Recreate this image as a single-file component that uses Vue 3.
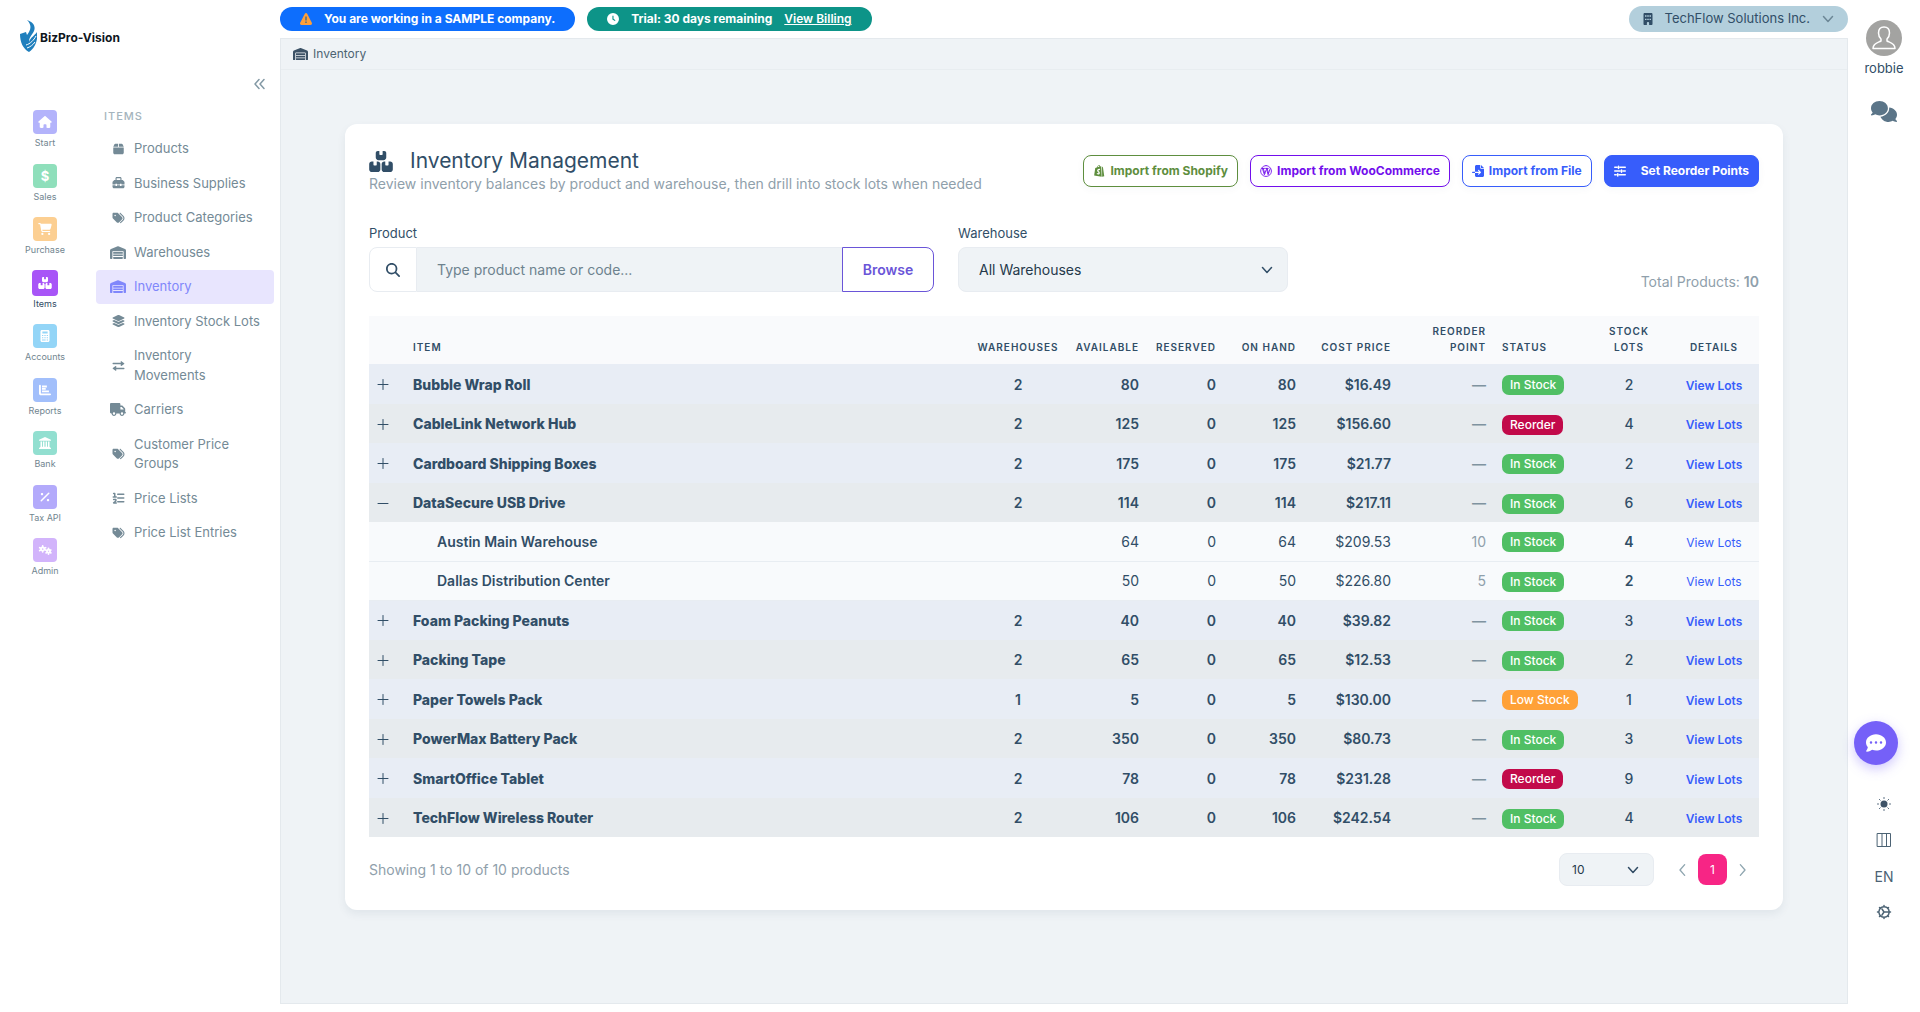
<template>
    <div class="layout">
        <aside class="sidebar">
            <a class="logo" href="#">
                <svg class="logo-mark" viewBox="0 0 17 32" aria-hidden="true">
                    <path fill="#1f7fbd" d="M7 0c6 2 9 6 7 11c-2 4-5 6-5 11c1-4 6-7 8-10c1 7-1 15-8 20C3 29 0 22 0 14l6-2l1 3c3-4 6-9 0-15z" />
                    <path fill="none" stroke="#fff" stroke-width="1" d="M6 25c4-1 8-5 10-9M7 28c3-1 6-3 8-6" />
                </svg>
                <span>BizPro-Vision</span>
            </a>
            <button class="collapse" type="button" aria-label="Collapse menu"><AppIcon name="collapse" /></button>
            <div class="menus">
                <nav class="rail">
                    <a v-for="entry in modules" :key="entry.label" href="#" class="module" :class="[entry.tone, { active: entry.active }]">
                        <span class="tile">
                            <template v-if="entry.icon === 'dollar'">$</template>
                            <AppIcon v-else :name="entry.icon" />
                        </span>
                        <span class="module-label">{{ entry.label }}</span>
                    </a>
                </nav>
                <nav class="submenu">
                    <h2>ITEMS</h2>
                    <ul>
                        <li v-for="link in links" :key="link.label">
                            <a href="#" :class="{ active: link.active }">
                                <span class="link-icon"><AppIcon :name="link.icon" :class="{ wide: link.wide }" /></span>
                                <span>{{ link.label }}</span>
                            </a>
                        </li>
                    </ul>
                </nav>
            </div>
        </aside>

        <main class="main">
            <header class="topbar">
                <div class="pill sample">
                    <svg class="pill-icon" viewBox="0 0 12 12" aria-hidden="true">
                        <path fill="#ff9f38" d="M6 0c.6 0 .9.3 1.2.8l4.6 9c.5 1-.1 2.2-1.2 2.2H1.4C.3 12-.3 10.8.2 9.8l4.6-9C5.1.3 5.4 0 6 0z" />
                        <path fill="#3f6b8a" d="M5.3 3.5h1.4v4H5.3zM5.3 8.5h1.4V10H5.3z" />
                    </svg>
                    <span>You are working in a SAMPLE company.</span>
                </div>
                <div class="pill trial">
                    <AppIcon name="clock" class="pill-icon" />
                    <span>Trial: 30 days remaining</span>
                    <a href="#">View Billing</a>
                </div>
                <button class="company" type="button">
                    <AppIcon name="building" class="company-icon" />
                    <span>TechFlow Solutions Inc.</span>
                    <AppIcon name="chevronDown" class="company-arrow" />
                </button>
            </header>

            <div class="frame">
                <nav class="breadcrumb">
                    <AppIcon name="warehouse" class="crumb-icon" />
                    <span>Inventory</span>
                </nav>

                <section class="card">
                    <div class="card-head">
                        <div>
                            <h1><AppIcon name="boxes" class="title-icon" />Inventory Management</h1>
                            <p>Review inventory balances by product and warehouse, then drill into stock lots when needed</p>
                        </div>
                        <div class="actions">
                            <button type="button" class="btn shopify"><AppIcon name="shopify" />Import from Shopify</button>
                            <button type="button" class="btn woo"><AppIcon name="wordpress" />Import from WooCommerce</button>
                            <button type="button" class="btn file"><AppIcon name="fileImport" />Import from File</button>
                            <button type="button" class="btn reorder-btn"><AppIcon name="sliders" />Set Reorder Points</button>
                        </div>
                    </div>

                    <div class="filters">
                        <div class="field product-field">
                            <label for="product">Product</label>
                            <div class="input-group">
                                <span class="search-icon"><AppIcon name="search" /></span>
                                <input id="product" v-model="search" type="text" placeholder="Type product name or code...">
                                <button type="button" class="browse">Browse</button>
                            </div>
                        </div>
                        <div class="field warehouse-field">
                            <label for="warehouse">Warehouse</label>
                            <div class="select-box">
                                <select id="warehouse">
                                    <option>All Warehouses</option>
                                    <option>Austin Main Warehouse</option>
                                    <option>Dallas Distribution Center</option>
                                </select>
                                <AppIcon name="chevronDown" class="select-arrow" />
                            </div>
                        </div>
                        <div class="total">Total Products: <strong>10</strong></div>
                    </div>

                    <table>
                        <colgroup>
                            <col class="c-toggle"><col><col class="c-warehouses"><col class="c-qty"><col class="c-reserved"><col class="c-qty">
                            <col class="c-mid"><col class="c-mid"><col class="c-mid"><col class="c-qty"><col class="c-details">
                        </colgroup>
                        <thead>
                            <tr>
                                <th></th>
                                <th>ITEM</th>
                                <th class="center">WAREHOUSES</th>
                                <th class="right">AVAILABLE</th>
                                <th class="right">RESERVED</th>
                                <th class="right">ON HAND</th>
                                <th class="right">COST PRICE</th>
                                <th class="right">REORDER POINT</th>
                                <th>STATUS</th>
                                <th class="center">STOCK LOTS</th>
                                <th class="center">DETAILS</th>
                            </tr>
                        </thead>
                        <tbody v-for="item in products" :key="item.name">
                            <tr class="product">
                                <td>
                                    <button type="button" class="toggle" :aria-label="item.open ? 'Collapse' : 'Expand'" @click="item.open = !item.open">
                                        <AppIcon :name="item.open ? 'minus' : 'plus'" />
                                    </button>
                                </td>
                                <td class="name">{{ item.name }}</td>
                                <td class="center">{{ item.warehouses }}</td>
                                <td class="right">{{ item.qty }}</td>
                                <td class="right">0</td>
                                <td class="right">{{ item.qty }}</td>
                                <td class="right">{{ item.cost }}</td>
                                <td class="right muted">—</td>
                                <td><span class="badge" :class="badgeClass(item.status)">{{ item.status }}</span></td>
                                <td class="center lots">{{ item.lots }}</td>
                                <td class="center"><a href="#">View Lots</a></td>
                            </tr>
                            <template v-if="item.open">
                                <tr v-for="row in item.rows" :key="row.name" class="location">
                                    <td></td>
                                    <td class="name">{{ row.name }}</td>
                                    <td></td>
                                    <td class="right">{{ row.qty }}</td>
                                    <td class="right">0</td>
                                    <td class="right">{{ row.qty }}</td>
                                    <td class="right">{{ row.cost }}</td>
                                    <td class="right muted">{{ row.reorder }}</td>
                                    <td><span class="badge" :class="badgeClass(row.status)">{{ row.status }}</span></td>
                                    <td class="center lots">{{ row.lots }}</td>
                                    <td class="center"><a href="#">View Lots</a></td>
                                </tr>
                            </template>
                        </tbody>
                    </table>

                    <div class="card-foot">
                        <span>Showing 1 to 10 of 10 products</span>
                        <div class="pager">
                            <div class="select-box small">
                                <select aria-label="Rows per page">
                                    <option>10</option>
                                    <option>25</option>
                                    <option>50</option>
                                </select>
                                <AppIcon name="chevronDown" class="select-arrow" />
                            </div>
                            <button type="button" class="step" aria-label="Previous"><AppIcon name="chevronLeft" /></button>
                            <button type="button" class="page">1</button>
                            <button type="button" class="step" aria-label="Next"><AppIcon name="chevronRight" /></button>
                        </div>
                    </div>
                </section>
            </div>
        </main>

        <aside class="tools">
            <a class="user" href="#">
                <svg class="avatar" viewBox="0 0 36 36" aria-hidden="true">
                    <circle cx="18" cy="18" r="18" fill="#a3a3a1" />
                    <path fill="none" stroke="#fff" stroke-width="1.5" stroke-linejoin="round" d="M18 7c-4 0-5.5 2.5-5.5 6c0 2.5 1 4.5 2.5 6v2c-3 1.5-8 2-8 7.5h22c0-5.5-5-6-8-7.5v-2c1.5-1.5 2.5-3.5 2.5-6c0-3.5-1.5-6-5.5-6z" />
                </svg>
                <span>robbie</span>
            </a>
            <button type="button" class="messages" aria-label="Messages"><AppIcon name="comments" /></button>
            <div class="tool-list">
                <button type="button" aria-label="Theme">
                    <svg viewBox="0 0 16 16" aria-hidden="true">
                        <circle cx="8" cy="8" r="3.5" fill="#3f5468" />
                        <path stroke="#5f7385" stroke-width="1" d="M8 1v2M8 13v2M1 8h2M13 8h2M3 3l1.5 1.5M11.5 11.5L13 13M3 13l1.5-1.5M11.5 4.5L13 3" />
                    </svg>
                </button>
                <button type="button" aria-label="Layout"><AppIcon name="columns" /></button>
                <button type="button">EN</button>
                <button type="button" aria-label="Settings"><AppIcon name="gear" /></button>
            </div>
        </aside>

        <button type="button" class="chat" aria-label="Chat"><AppIcon name="commentDots" /></button>
    </div>
</template>

<script setup>
import { h, ref } from 'vue';

const icons = {
    house: { box: '0 0 576 512', d: 'M575.8 255.5c0 18-15 32.1-32 32.1h-32l.7 160.2c0 2.7-.2 5.4-.5 8.1V472c0 22.1-17.9 40-40 40H392c-22.1 0-40-17.9-40-40V384c0-17.7-14.3-32-32-32H256c-17.7 0-32 14.3-32 32v88c0 22.1-17.9 40-40 40H104c-22.1 0-40-17.9-40-40V287.6H32c-18 0-32-14-32-32.1c0-9 3-17 10-24L266.4 8c7-7 15-8 22-8s15 2 21 7L564.8 231.5c8 7 12 15 11 24z' },
    cart: { box: '0 0 576 512', d: 'M0 24C0 10.7 10.7 0 24 0H69.5c22 0 41.5 12.8 50.6 32h411c26.3 0 45.5 25 38.6 50.4l-41 152.3c-8.5 31.4-37 53.3-69.5 53.3H170.7l5.4 28.5c2.2 11.3 12.1 19.5 23.6 19.5H488c13.3 0 24 10.7 24 24s-10.7 24-24 24H199.7c-34.6 0-64.3-24.6-70.7-58.5L77.4 54.5c-.7-3.8-4-6.5-7.9-6.5H24C10.7 48 0 37.3 0 24zM128 464a48 48 0 1 1 96 0 48 48 0 1 1 -96 0zm336-48a48 48 0 1 1 0 96 48 48 0 1 1 0-96z' },
    boxes: { box: '0 0 576 512', d: 'M248 0H208c-26.5 0-48 21.5-48 48V160c0 35.3 28.7 64 64 64H352c35.3 0 64-28.7 64-64V48c0-26.5-21.5-48-48-48H328V80c0 8.8-7.2 16-16 16H264c-8.8 0-16-7.2-16-16V0zM64 256c-35.3 0-64 28.7-64 64V448c0 35.3 28.7 64 64 64H208c35.3 0 64-28.7 64-64V320c0-35.3-28.7-64-64-64H184v80c0 8.8-7.2 16-16 16H120c-8.8 0-16-7.2-16-16V256H64zM368 512H512c35.3 0 64-28.7 64-64V320c0-35.3-28.7-64-64-64H472v80c0 8.8-7.2 16-16 16H408c-8.8 0-16-7.2-16-16V256H368c-35.3 0-64 28.7-64 64V448c0 35.3 28.7 64 64 64z' },
    calculator: { box: '0 0 384 512', d: 'M64 0h256c35 0 64 29 64 64v384c0 35-29 64-64 64H64c-35 0-64-29-64-64V64C0 29 29 0 64 0zM80 64v80h224V64zM64 208v48h56v-48zM164 208v48h56v-48zM264 208v48h56v-48zM64 304v48h56v-48zM164 304v48h56v-48zM264 304v48h56v-48zM64 400v48h156v-48zM264 400v48h56v-48z' },
    chart: { box: '0 0 512 512', d: 'M40 32c22 0 40 14 40 32v320c0 9 7 16 16 16h376c54 0 54 80 0 80H80c-44 0-80-36-80-80V64c0-18 18-32 40-32zM128 64h208v80H128zM128 168h160v80H128zM128 272h296v80H128z' },
    bank: { box: '0 0 512 512', d: 'M256 0l232 110c16 8 24 16 24 34v16H0v-16c0-18 8-26 24-34zM64 192h64v224h40V192h64v224h48V192h64v224h40V192h64v224l32 32c20 10 32 22 32 48v16H0v-16c0-26 12-38 32-48l32-32z' },
    percent: { box: '0 0 16 16', line: 2, d: 'M3 13L13 3M3.5 3.5h1v1h-1zM11.5 11.5h1v1h-1z' },
    gears: { box: '0 0 24 18', line: 3, d: 'M8 2v2M8 12v-2M3 5l2 1M13 5l-2 1M3 10l2-1M8 4.5a2.8 2.8 0 1 0 .1 0M18 6v2M18 16v-2M13 9l2 1M22 9l-1 1M14 14l1-1M22 14l-1-1M18 8.5a2.5 2.5 0 1 0 .1 0' },
    box: { box: '0 0 448 512', d: 'M90 32h116v128H0L50 58c8-16 22-26 40-26zM242 32h116c18 0 32 10 40 26l50 102H242zM0 192h448v224c0 35-29 64-64 64H64c-35 0-64-29-64-64z' },
    toolbox: { box: '0 0 512 512', d: 'M176 56v72h160V56c0-5-3-8-8-8H184c-5 0-8 3-8 8zM128 128V56c0-31 25-56 56-56h144c31 0 56 25 56 56v72h28c13 0 25 5 34 14l52 52c9 9 14 21 14 34v92H384v-32h-64v32H192v-32h-64v32H0v-92c0-13 5-25 14-34l52-52c9-9 21-14 34-14zM0 352h128v32h64v-32h128v32h64v-32h128v64c0 35-29 64-64 64H64c-35 0-64-29-64-64z' },
    tags: { box: '0 0 512 512', d: 'M345 39.1L472.8 168.4c52.4 53 52.4 138.2 0 191.2L360.8 472.9c-9.3 9.4-24.5 9.5-33.9 .2s-9.5-24.5-.2-33.9L438.6 325.9c33.9-34.3 33.9-89.4 0-123.7L310.9 72.9c-9.3-9.4-9.2-24.6 .2-33.9s24.6-9.2 33.9 .2zM0 229.5V80C0 53.5 21.5 32 48 32H197.5c17 0 33.3 6.7 45.3 18.7l168 168c25 25 25 65.5 0 90.5L277.3 442.7c-25 25-65.5 25-90.5 0l-168-168C6.7 262.7 0 246.5 0 229.5zM144 144a32 32 0 1 0 -64 0 32 32 0 1 0 64 0z' },
    warehouse: { box: '0 0 640 512', d: 'M0 488V171.3c0-26.2 15.9-49.7 40.2-59.4L308.1 4.8c7.6-3.1 16.1-3.1 23.8 0L599.8 111.9c24.3 9.7 40.2 33.3 40.2 59.4V488c0 13.3-10.7 24-24 24H568c-13.3 0-24-10.7-24-24V224c0-17.7-14.3-32-32-32H128c-17.7 0-32 14.3-32 32V488c0 13.3-10.7 24-24 24H24c-13.3 0-24-10.7-24-24zm488 24l-336 0c-13.3 0-24-10.7-24-24V432H512l0 56c0 13.3-10.7 24-24 24zM128 400V336H512v64H128zm0-96V224H512v80H128z' },
    layers: { box: '32 0 512 512', d: 'M264.5 5.2c14.9-6.9 32.1-6.9 47 0l218.6 101c8.5 3.9 13.9 12.4 13.9 21.8s-5.4 17.9-13.9 21.8l-218.6 101c-14.9 6.9-32.1 6.9-47 0L45.9 149.8C37.4 145.8 32 137.3 32 128s5.4-17.9 13.9-21.8L264.5 5.2zM476.9 209.6l53.2 24.6c8.5 3.9 13.9 12.4 13.9 21.8s-5.4 17.9-13.9 21.8l-218.6 101c-14.9 6.9-32.1 6.9-47 0L45.9 277.8C37.4 273.8 32 265.3 32 256s5.4-17.9 13.9-21.8l53.2-24.6 152 70.2c23.4 10.8 50.4 10.8 73.8 0l152-70.2zm-152 198.2l152-70.2 53.2 24.6c8.5 3.9 13.9 12.4 13.9 21.8s-5.4 17.9-13.9 21.8l-218.6 101c-14.9 6.9-32.1 6.9-47 0L45.9 405.8C37.4 401.8 32 393.3 32 384s5.4-17.9 13.9-21.8l53.2-24.6 152 70.2c23.4 10.8 50.4 10.8 73.8 0z' },
    arrows: { box: '0 0 512 512', d: 'M24 116h328V64c0-14 16-22 27-12l120 88c9 8 9 20 0 28l-120 88c-11 9-27 2-27-12v-64H24c-32 0-32-64 0-64zM488 332H160v-64c0-14-16-22-27-12L13 344c-9 8-9 20 0 28l120 88c11 9 27 2 27-12v-52h328c32 0 32-64 0-64z' },
    truck: { box: '0 0 640 512', d: 'M48 0C21.5 0 0 21.5 0 48V368c0 26.5 21.5 48 48 48H64c0 53 43 96 96 96s96-43 96-96H384c0 53 43 96 96 96s96-43 96-96h32c17.7 0 32-14.3 32-32s-14.3-32-32-32V288 256 237.3c0-17-6.7-33.3-18.7-45.3L512 114.7c-12-12-28.3-18.7-45.3-18.7H416V48c0-26.5-21.5-48-48-48H48zM416 160h50.7L544 237.3V256H416V160zM112 416a48 48 0 1 1 96 0 48 48 0 1 1 -96 0zm368-48a48 48 0 1 1 0 96 48 48 0 1 1 0-96z' },
    list: { box: '0 0 16 16', line: 2, d: 'M7 3h8M7 8h8M7 13h8M1.5 2H3v4M1 6.5h4M1.5 10h3v2l-3 2.500H5' },
    collapse: { box: '0 0 12 12', line: 1.5, d: 'M5.5 1.5L1.5 6l4 4.5M10.5 1.5L6.5 6l4 4.5' },
    clock: { box: '0 0 16 16', d: 'M8 0a8 8 0 1 1 0 16A8 8 0 1 1 8 0zM7.2 3.500v5l3.300 2.200.8-1.200-2.600-1.800V3.500z' },
    building: { box: '0 0 384 512', d: 'M48 0h288c27 0 48 21 48 48v416c0 27-21 48-48 48h-96v-80c0-27-21-48-48-48s-48 21-48 48v80H48c-27 0-48-21-48-48V48C0 21 21 0 48 0zM64 240v56h64v-56zM160 240v56h64v-56zM256 240v56h64v-56zM64 96v64h64V96zM160 96v64h64V96zM256 96v64h64V96z' },
    search: { box: '0 0 512 512', d: 'M416 208c0 45.9-14.9 88.3-40 122.7L502.6 457.4c12.5 12.5 12.5 32.8 0 45.3s-32.8 12.5-45.3 0L330.7 376c-34.4 25.2-76.8 40-122.7 40C93.1 416 0 322.9 0 208S93.1 0 208 0S416 93.1 416 208zM208 352a144 144 0 1 0 0-288 144 144 0 1 0 0 288z' },
    shopify: { box: '0 0 14 16', d: 'M2 4l2-.6C4.500 1.500 5.800.2 7 .2c.9 0 1.500.7 1.800 1.800L10 1.700 10.600 15.800.5 14zM11 2l1.300 1.200L14 15l-2.800.8zM5 3.100l2.700-.8C7.200.6 5.500 1.200 5 3.100zM8.500 5.200C6 4.200 4.300 6 4.500 7.800c.2 1.700 2 1.800 1.800 2.800-.2.800-1.500.2-2 0L4 12c1.800 1.300 4 .5 4.100-1.500.1-2-1.800-2-1.800-3 0-.9 1-.9 1.800-.6z' },
    wordpress: { box: '0 0 16 16', line: 1.2, d: 'M8 .8a7.2 7.2 0 1 0 .1 0M2.5 4.5H6M7.5 4.5H11M3.2 4.5L5.8 13l2.400-6.500M4.300 4.500L6.400 11M8.500 4.500l2.300 8.500L13.500 5M9.500 4.500l1.800 6' },
    fileImport: { box: '0 0 512 512', d: 'M128 64c0-35 29-64 64-64h160v128c0 18 14 32 32 32h128v288c0 35-29 64-64 64H192c-35 0-64-29-64-64V336h174l-39 39c-22 22 11 56 34 34l80-80c9-9 9-25 0-34l-80-80c-23-22-56 12-34 34l39 39H128zM128 288H24c-32 0-32 48 0 48h104zM384 0v128h128z' },
    sliders: { box: '0 0 16 16', line: 2, d: 'M1 3h3M8 3h7M6 1.5v3M1 8h7M12 8h3M10 6.5v3M1 13h2M7 13h8M5 11.5v3' },
    plus: { box: '0 0 12 12', line: 1, d: 'M1 6.5h10M6 1.5v10' },
    minus: { box: '0 0 12 12', line: 1, d: 'M1 6.5h10' },
    chevronDown: { box: '0 0 12 12', line: 1.5, d: 'M1.5 3.5L6 8.5l4.5-5' },
    chevronLeft: { box: '0 0 12 12', line: 1, d: 'M8 2L4.500 6L8 10' },
    chevronRight: { box: '0 0 12 12', line: 1, d: 'M4 2l3.500 4L4 10' },
    columns: { box: '0 0 16 16', line: 1, d: 'M1.5 1.5h13v13h-13zM6 1.5v13M10.5 1.5v13' },
    gear: { box: '0 0 16 16', line: 1.5, d: 'M8 2.8a5.2 5.2 0 1 0 .1 0M8 1.5v1M8 13.5v1M1.5 8h1M13.5 8h1M3.5 3.5l.8.8M11.8 11.8l.7.7M3.5 12.5l.8-.8M11.7 4.3l.8-.8M8 8h4.5M6 5l2 3-2 3' },
    comments: { box: '0 0 640 512', d: 'M208 352c115 0 208-79 208-176S323 0 208 0S0 79 0 176c0 39 15 74 40 103c-7 17-18 32-36 47c-9 9-3 26 10 26c34 0 64-12 87-26c32 17 68 26 107 26zM448 176c0 112-99 199-216 207c32 74 109 129 200 129c39 0 76-9 107-26c23 14 53 26 87 26c13 0 19-17 10-26c-18-15-29-30-36-47c25-28 40-64 40-103c0-86-84-166-192-176z' },
    commentDots: { box: '0 0 512 512', d: 'M256 448c141.4 0 256-93.1 256-208S397.4 32 256 32S0 125.1 0 240c0 45.1 17.7 86.8 47.7 120.9c-1.9 24.5-11.4 46.3-21.4 62.9c-5.5 9.2-11.1 16.6-15.2 21.6c-14 15-7 34.6 9.9 34.6c28.7 0 57.6-8.9 81.6-19.3c22.9-10 42.4-21.9 54.3-30.6c31.8 11.5 67 17.9 104.1 17.9zM128 208a32 32 0 1 1 0 64 32 32 0 1 1 0-64zm128 0a32 32 0 1 1 0 64 32 32 0 1 1 0-64zm96 32a32 32 0 1 1 64 0 32 32 0 1 1 -64 0z' }
};

// Icons with a "line" width are stroked, the others are filled
const AppIcon = (props) => {
    const { box, d, line } = icons[props.name];
    const paint = line
        ? { fill: 'none', stroke: 'currentColor', 'stroke-width': line, 'stroke-linecap': 'round', 'stroke-linejoin': 'round' }
        : { fill: 'currentColor', 'fill-rule': 'evenodd' };
    return h('svg', { viewBox: box, 'aria-hidden': 'true' }, [h('path', { d, ...paint })]);
};
AppIcon.props = ['name'];

const modules = [
    { label: 'Start', icon: 'house', tone: 'indigo' },
    { label: 'Sales', icon: 'dollar', tone: 'green' },
    { label: 'Purchase', icon: 'cart', tone: 'orange' },
    { label: 'Items', icon: 'boxes', tone: 'purple', active: true },
    { label: 'Accounts', icon: 'calculator', tone: 'sky' },
    { label: 'Reports', icon: 'chart', tone: 'blue' },
    { label: 'Bank', icon: 'bank', tone: 'teal' },
    { label: 'Tax API', icon: 'percent', tone: 'violet' },
    { label: 'Admin', icon: 'gears', tone: 'lilac' }
];

const links = [
    { label: 'Products', icon: 'box' },
    { label: 'Business Supplies', icon: 'toolbox' },
    { label: 'Product Categories', icon: 'tags' },
    { label: 'Warehouses', icon: 'warehouse', wide: true },
    { label: 'Inventory', icon: 'warehouse', wide: true, active: true },
    { label: 'Inventory Stock Lots', icon: 'layers' },
    { label: 'Inventory Movements', icon: 'arrows' },
    { label: 'Carriers', icon: 'truck', wide: true },
    { label: 'Customer Price Groups', icon: 'tags' },
    { label: 'Price Lists', icon: 'list' },
    { label: 'Price List Entries', icon: 'tags' }
];

const search = ref('');

const products = ref([
    { name: 'Bubble Wrap Roll', warehouses: 2, qty: 80, cost: '$16.49', status: 'In Stock', lots: 2 },
    { name: 'CableLink Network Hub', warehouses: 2, qty: 125, cost: '$156.60', status: 'Reorder', lots: 4 },
    { name: 'Cardboard Shipping Boxes', warehouses: 2, qty: 175, cost: '$21.77', status: 'In Stock', lots: 2 },
    {
        name: 'DataSecure USB Drive', warehouses: 2, qty: 114, cost: '$217.11', status: 'In Stock', lots: 6, open: true,
        rows: [
            { name: 'Austin Main Warehouse', qty: 64, cost: '$209.53', reorder: 10, status: 'In Stock', lots: 4 },
            { name: 'Dallas Distribution Center', qty: 50, cost: '$226.80', reorder: 5, status: 'In Stock', lots: 2 }
        ]
    },
    { name: 'Foam Packing Peanuts', warehouses: 2, qty: 40, cost: '$39.82', status: 'In Stock', lots: 3 },
    { name: 'Packing Tape', warehouses: 2, qty: 65, cost: '$12.53', status: 'In Stock', lots: 2 },
    { name: 'Paper Towels Pack', warehouses: 1, qty: 5, cost: '$130.00', status: 'Low Stock', lots: 1 },
    { name: 'PowerMax Battery Pack', warehouses: 2, qty: 350, cost: '$80.73', status: 'In Stock', lots: 3 },
    { name: 'SmartOffice Tablet', warehouses: 2, qty: 78, cost: '$231.28', status: 'Reorder', lots: 9 },
    { name: 'TechFlow Wireless Router', warehouses: 2, qty: 106, cost: '$242.54', status: 'In Stock', lots: 4 }
]);

const badgeClass = (status) => status.toLowerCase().replace(' ', '-');
</script>

<style>
body {
    background: #fff;
}
</style>

<style scoped>
.layout,
.layout * {
    box-sizing: border-box;
}
.layout {
    display: grid;
    grid-template-columns: 280px minmax(0, 1fr) 72px;
    min-height: 100vh;
    font-family: Inter, "Liberation Sans", sans-serif;
    font-size: 14px;
    line-height: 1.5;
    color: #314e67;
}
.layout svg {
    display: block;
    flex: none;
}
a {
    color: inherit;
    text-decoration: none;
}
button {
    padding: 0;
    border: 0;
    background: none;
    color: inherit;
    font: inherit;
    cursor: pointer;
}
h1,
h2,
p,
ul {
    margin: 0;
    padding: 0;
    font-weight: 400;
    list-style: none;
}

/* Sidebar */
.sidebar {
    display: flex;
    flex-direction: column;
    padding: 20px 6px 0 20px;
}
.logo {
    display: flex;
    align-items: center;
    gap: 3px;
    height: 32px;
    color: #10161d;
    font-size: 12px;
    font-weight: 700;
}
.logo-mark {
    width: 17px;
    height: 32px;
}
.logo span {
    padding-top: 4px;
}
.collapse {
    align-self: flex-end;
    margin: 25px 7px 0 0;
    padding: 1px;
    color: #8399a5;
}
.collapse svg {
    width: 13px;
    height: 12px;
}
.menus {
    display: flex;
    gap: 26px;
    margin-top: 19px;
}
.rail {
    display: flex;
    flex-direction: column;
    gap: 16px;
    width: 50px;
    flex: none;
}
.module {
    display: flex;
    flex-direction: column;
    align-items: center;
    color: #71858f;
    font-size: 9px;
    white-space: nowrap;
}
.tile {
    display: grid;
    place-items: center;
    width: 24px;
    height: 24px;
    border-radius: 4px;
    color: #fff;
    font-size: 13px;
    font-weight: 700;
    line-height: 20px;
}
.tile svg {
    width: 14px;
    height: 12px;
}
.module-label {
    padding-top: 2px;
    margin-bottom: -2px;
}
.active .tile {
    width: 26px;
    height: 26px;
    margin: -1px;
}
.module.active {
    color: #304b63;
}
.indigo .tile { background: #b3b3fb; }
.green .tile { background: #8fdfbb; }
.orange .tile { background: #fccf92; }
.purple .tile { background: #a855f7; }
.sky .tile { background: #93d5f7; }
.blue .tile { background: #a2bffb; }
.teal .tile { background: #92dfd0; }
.violet .tile { background: #b3aafb; }
.lilac .tile { background: #d2b4fb; }
.submenu {
    flex: 1;
}
.submenu h2 {
    margin-bottom: 9px;
    padding-left: 8px;
    color: #a5b4bd;
    font-size: 11px;
    font-weight: 500;
    letter-spacing: 1px;
    line-height: 13px;
}
.submenu ul {
    display: flex;
    flex-direction: column;
    gap: 1px;
}
.submenu a {
    display: flex;
    align-items: center;
    gap: 8px;
    padding: 7px 10px 7px 14px;
    border-radius: 4px;
    color: #748a96;
    font-size: 13px;
}
.submenu a.active {
    background: #e8e5fe;
    color: #8087fb;
}
.link-icon {
    display: flex;
    justify-content: center;
    width: 16px;
    flex: none;
}
.link-icon svg {
    width: 13px;
    height: 12px;
}
.link-icon svg.wide {
    width: 16px;
    height: 13px;
}

/* Top bar */
.main {
    display: flex;
    flex-direction: column;
    padding-bottom: 8px;
}
.topbar {
    display: flex;
    align-items: center;
    gap: 12px;
    height: 38px;
}
.pill {
    display: flex;
    align-items: center;
    gap: 12px;
    height: 24px;
    padding: 0 20px;
    border-radius: 12px;
    color: #fff;
    font-size: 12px;
    font-weight: 700;
}
.sample {
    background: #0d6efd;
}
.trial {
    background: #0d9488;
}
.pill a {
    font-weight: 600;
    text-decoration: underline;
}
.pill-icon {
    width: 12px;
    height: 12px;
}
.company {
    display: flex;
    align-items: center;
    gap: 12px;
    height: 26px;
    margin-left: auto;
    padding: 0 14px;
    border-radius: 13px;
    background: #b3cfdc;
    font-size: 13px;
}
.company-icon {
    width: 10px;
    height: 12px;
}
.company-arrow {
    width: 12px;
    height: 12px;
    color: #6c8796;
}

/* Content frame */
.frame {
    flex: 1;
    border: 1px solid #e4e9ed;
    background: #eff3f6;
}
.breadcrumb {
    display: flex;
    align-items: center;
    gap: 5px;
    height: 31px;
    padding-left: 12px;
    border-bottom: 1px solid #e8edf0;
    color: #4d6472;
    font-size: 12px;
}
.crumb-icon {
    width: 15px;
    height: 12px;
    color: #3c5266;
}
.card {
    margin: 54px 64px 64px;
    padding: 24px;
    border-radius: 12px;
    background: #fff;
    box-shadow: 0 4px 8px rgba(47, 75, 98, 0.08);
}
.card-head {
    display: flex;
    justify-content: space-between;
    align-items: center;
}
h1 {
    display: flex;
    align-items: center;
    gap: 17px;
    font-size: 21px;
    line-height: 26px;
}
.title-icon {
    width: 24px;
    height: 21px;
}
.card-head p {
    color: #8fa0ab;
    line-height: 20px;
}
.actions {
    display: flex;
    gap: 12px;
}
.btn {
    display: flex;
    align-items: center;
    gap: 5px;
    height: 32px;
    padding: 0 9px;
    border: 1px solid;
    border-radius: 8px;
    background: #fff;
    font-size: 12px;
    font-weight: 700;
    box-shadow: 0 2px 8px rgba(47, 75, 98, 0.04);
}
.btn svg {
    width: 12px;
    height: 12px;
}
.shopify {
    color: #5e8e3e;
}
.woo {
    color: #720eec;
}
.file {
    color: #375dfb;
}
.reorder-btn {
    gap: 15px;
    border-color: #375dfb;
    background: #375dfb;
    color: #fff;
}

/* Filters */
.filters {
    display: flex;
    align-items: flex-end;
    gap: 24px;
    margin-top: 29px;
}
.field label {
    display: block;
    margin-bottom: 4px;
    font-size: 13px;
    line-height: 20px;
}
.product-field {
    flex: 0 1 565px;
}
.warehouse-field {
    flex: 0 1 330px;
}
.input-group {
    display: flex;
    height: 45px;
}
.search-icon {
    display: grid;
    place-items: center;
    width: 48px;
    border: 1px solid #e8ecf1;
    border-radius: 8px 0 0 8px;
}
.search-icon svg {
    width: 14px;
    height: 14px;
}
.input-group input {
    flex: 1;
    min-width: 0;
    padding: 0 20px;
    border: 1px solid #e8ecf1;
    border-width: 1px 0;
    background: #eff3f6;
    color: #304b63;
    font: inherit;
    outline: 0;
}
.input-group input::placeholder {
    color: #6d828e;
    opacity: 1;
}
.browse {
    width: 92px;
    border: 1px solid #6a55d8;
    border-radius: 0 8px 8px 0;
    background: #fff;
    color: #6a55d8;
    font-weight: 600;
}
.select-box {
    display: grid;
    align-items: center;
}
.select-box > * {
    grid-area: 1 / 1;
}
select {
    width: 100%;
    height: 45px;
    padding: 0 20px;
    border: 1px solid #e8ecf1;
    border-radius: 8px;
    background: #eff3f6;
    color: #25394b;
    font: inherit;
    appearance: none;
}
.select-arrow {
    justify-self: end;
    width: 12px;
    height: 12px;
    margin-right: 15px;
    pointer-events: none;
}
.total {
    margin-left: auto;
    color: #8fa0ab;
}
.total strong {
    font-weight: 600;
}

/* Inventory table */
table {
    width: 100%;
    margin-top: 24px;
    border-collapse: collapse;
    table-layout: fixed;
}
.c-toggle { width: 36px; }
.c-warehouses { width: 98px; }
.c-qty { width: 80px; }
.c-reserved { width: 77px; }
.c-mid { width: 95px; }
.c-details { width: 90px; }
th {
    height: 48px;
    padding: 0 8px 9px;
    background: #f9fafc;
    font-size: 10px;
    font-weight: 600;
    letter-spacing: 1px;
    line-height: 16px;
    text-align: left;
    vertical-align: bottom;
}
td {
    height: 40px;
    padding: 0 8px;
}
.center {
    text-align: center;
}
.right {
    text-align: right;
}
.product td {
    background: #e8edf5;
    font-weight: 600;
}
tbody:nth-of-type(even) td {
    height: 39px;
}
tbody:nth-of-type(even) .product td {
    background: #e7ebee;
}
.product .name {
    font-weight: 800;
}
.product .muted {
    color: #7f93a0;
}
.location td {
    border-bottom: 1px solid #e8edf2;
    background: #f8fafc;
}
.location .name {
    padding-left: 32px;
    font-weight: 600;
}
.location .muted {
    color: #8fa0ab;
}
.product .lots {
    font-weight: 500;
}
.location .lots {
    font-weight: 600;
}
td a {
    color: #375dfb;
    font-size: 12px;
}
.toggle {
    display: block;
}
.toggle svg {
    width: 12px;
    height: 12px;
}
.badge {
    display: inline-block;
    padding: 0 8px;
    border-radius: 7px;
    color: #fff;
    font-size: 12px;
    font-weight: 500;
    line-height: 20px;
    vertical-align: middle;
}
.in-stock { background: #50bf64; }
.reorder { background: #c20a4a; }
.low-stock { background: #ffa137; }

/* Footer */
.card-foot {
    display: flex;
    justify-content: space-between;
    align-items: center;
    margin-top: 16px;
    color: #8fa0ab;
}
.pager {
    display: flex;
    align-items: center;
    gap: 8px;
    padding-right: 8px;
}
.small {
    width: 95px;
    margin-right: 12px;
    color: #304b63;
}
.small select {
    height: 33px;
    padding: 0 12px;
    font-size: 12px;
}
.step {
    padding: 4px 0;
    color: #8fa6b0;
}
.step svg {
    width: 16px;
    height: 16px;
}
.page {
    width: 29px;
    height: 31px;
    border-radius: 8px;
    background: #f72585;
    color: #fff;
    font-size: 12px;
}

/* Right tools */
.tools {
    display: flex;
    flex-direction: column;
    align-items: center;
    padding: 20px 0 88px;
}
.user {
    display: flex;
    flex-direction: column;
    align-items: center;
    gap: 3px;
    font-size: 13px;
}
.avatar {
    width: 36px;
    height: 36px;
}
.messages {
    margin-top: 22px;
    color: #5b7588;
}
.messages svg {
    width: 26px;
    height: 21px;
}
.tool-list {
    display: flex;
    flex-direction: column;
    align-items: center;
    gap: 12px;
    margin-top: auto;
    color: #4c6374;
}
.tool-list button {
    height: 24px;
}
.tool-list svg {
    width: 16px;
    height: 16px;
}
.chat {
    position: fixed;
    right: 22px;
    bottom: 247px;
    display: grid;
    place-items: center;
    width: 44px;
    height: 44px;
    border-radius: 50%;
    background: #7560f8;
    color: #fff;
    box-shadow: 0 4px 12px rgba(117, 96, 248, 0.35);
}
.chat svg {
    width: 20px;
    height: 20px;
}
</style>
